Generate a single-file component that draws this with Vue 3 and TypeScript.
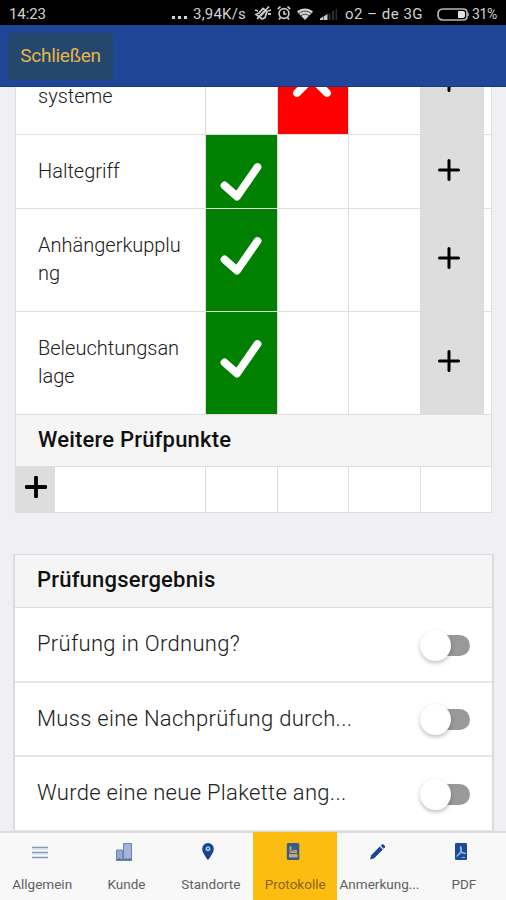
<script setup lang="ts">
type Mark = 'ok' | 'fail' | null

interface CheckRow {
  id: string
  lines: string[]
  size: 'single' | 'double'
  marks: Mark[]
}

interface Tab {
  icon: string
  label: string
  active?: boolean
}

const checks: CheckRow[] = [
  { id: 'systeme', lines: ['', 'systeme'], size: 'double', marks: [null, 'fail', null] },
  { id: 'haltegriff', lines: ['Haltegriff'], size: 'single', marks: ['ok', null, null] },
  { id: 'kupplung', lines: ['Anhängerkupplu', 'ng'], size: 'double', marks: ['ok', null, null] },
  { id: 'beleuchtung', lines: ['Beleuchtungsan', 'lage'], size: 'double', marks: ['ok', null, null] },
]

const questions: string[] = [
  'Prüfung in Ordnung?',
  'Muss eine Nachprüfung durch...',
  'Wurde eine neue Plakette ang...',
]

const tabs: Tab[] = [
  { icon: 'menu', label: 'Allgemein' },
  { icon: 'building', label: 'Kunde' },
  { icon: 'pin', label: 'Standorte' },
  { icon: 'form', label: 'Protokolle', active: true },
  { icon: 'pencil', label: 'Anmerkung...' },
  { icon: 'pdf', label: 'PDF' },
]
</script>

<template>
  <div class="screen">
    <div class="status">
      <span class="clock">14:23</span>
      <span class="dots"><i></i><i></i><i></i></span>
      <span class="speed">3,94K/s</span>
      <svg class="s-mute" viewBox="0 0 18 16" fill="none" stroke="#c8c8c8" stroke-width="1.800">
        <path d="M2 9.500 5 8l4-4.500 4 3-2 6-3 1.500zM3 14 15 1.500M14 6l3-1M14 9h3M1 5l3 1" />
        <path d="M6 11l6-6" stroke-width="2.400" />
      </svg>
      <svg class="s-alarm" viewBox="0 0 14 16" fill="none" stroke="#c8c8c8" stroke-width="1.700">
        <circle cx="7" cy="8.500" r="4.900" />
        <path d="M7 6v3h2.500M.8 4.200l2.700-2.700M13.200 4.200l-2.700-2.700M3.500 12.500 2 14.500M10.500 12.500l1.500 2" />
      </svg>
      <svg class="s-wifi" viewBox="0 0 16 12">
        <path d="M0 3.800C4.500-.6 11.500-.6 16 3.800L8 12z" fill="#d2d2d2" />
        <path d="M1.800 5.600c3.600-3.300 8.800-3.300 12.400 0M4 7.900c2.400-2.200 5.600-2.200 8 0" fill="none" stroke="#222" stroke-width=".8" />
      </svg>
      <svg class="s-signal" viewBox="0 0 18 11">
        <path d="M0 11V9.500L7.500 5v6z" fill="#c8c8c8" />
        <path d="M3.500 7v4" stroke="#333" stroke-width=".7" />
        <path d="M8.500 11V4.500H10.500V11zM12 11V2h2v9zM15.500 11V0h1.500v11z" fill="#303030" />
      </svg>
      <span class="carrier">o2 – de 3G</span>
      <svg class="s-battery" viewBox="0 0 32 13">
        <path d="M6 1h20q4 0 4 3.500v4q0 3.500-4 3.500H6Q1 12 1 6.500T6 1z" fill="none" stroke="#b8b8b8" stroke-width="1.700" />
        <path d="M21 3h5q2 0 2 2v3q0 2-2 2h-5z" fill="#e2e2e2" />
        <path d="M31 5v3" stroke="#b8b8b8" stroke-width="1.500" />
      </svg>
      <span class="percent">31%</span>
    </div>

    <header class="toolbar">
      <button class="close"><span>Schließen</span></button>
    </header>

    <main class="content">
      <section class="table">
        <div v-for="row in checks" :key="row.id" class="row" :class="row.size">
          <div class="label">
            <span v-for="(line, n) in row.lines" :key="n">{{ line }}</span>
          </div>
          <div v-for="(mark, n) in row.marks" :key="n" class="cell" :class="mark">
            <svg v-if="mark" viewBox="0 0 42 42" fill="none" stroke="#fff" stroke-linecap="round" stroke-linejoin="round">
              <path v-if="mark === 'ok'" d="M4.500 25.500 17 36.500 37.500 7" stroke-width="7.800" />
              <path v-else d="M6 6 36 36M36 6 6 36" stroke-width="7.800" />
            </svg>
          </div>
          <div class="add-cell">
            <button class="add">
              <svg viewBox="0 0 22 22"><path d="M11 1.500v19M1.500 11h19" /></svg>
            </button>
          </div>
        </div>
        <h2 class="heading more"><span>Weitere Prüfpunkte</span></h2>
        <div class="row blank">
          <div class="new-cell">
            <button class="add small">
              <svg viewBox="0 0 22 22"><path d="M11 1.500v19M1.500 11h19" /></svg>
            </button>
          </div>
          <div v-for="n in 4" :key="n" class="cell"></div>
        </div>
      </section>

      <section class="result">
        <h2 class="heading"><span>Prüfungsergebnis</span></h2>
        <div v-for="q in questions" :key="q" class="question">
          <span>{{ q }}</span>
          <span class="toggle"><i></i></span>
        </div>
      </section>
    </main>

    <nav class="tabs">
      <a v-for="tab in tabs" :key="tab.label" class="tab" :class="{ active: tab.active }">
        <svg viewBox="0 0 18 20">
          <g v-if="tab.icon === 'menu'">
            <path d="M1 5.500h16M1 10.500h16M1 15.500h16" stroke="#8395bf" stroke-width="1.600" />
            <path d="M1 7h16M1 12h16" stroke="#cbd4e6" stroke-width="1" />
          </g>
          <g v-else-if="tab.icon === 'building'">
            <path d="M1.500 8h6v10h-6z" fill="#96a9cc" stroke="#7188b7" />
            <path d="M8.500 1.500h8v16.500h-8z" fill="#a2b5d8" stroke="#6984b7" />
            <path d="M1 18h16M4 16v2M11 16v2M14.500 16v2" stroke="#536c9c" stroke-width="1.300" />
          </g>
          <g v-else-if="tab.icon === 'pin'">
            <path d="M9 1a5.800 5.800 0 0 0-5.800 5.900C3.200 11 9 18 9 18s5.800-7 5.800-11.100A5.800 5.800 0 0 0 9 1z" fill="#164494" />
            <circle cx="9" cy="6.700" r="2.500" fill="#a9c0e6" />
            <circle cx="9" cy="6.700" r="1" fill="#315da8" />
          </g>
          <g v-else-if="tab.icon === 'form'">
            <rect x="2.800" y="1" width="12.500" height="17" rx="1.500" fill="#315f86" />
            <path d="M5.500 4.500h2v4h-2zM5.500 9.300h7.500v1.800H5.500zM5 12h8.500v3.500H5z" fill="#c5a77a" />
            <path d="M8.500 7.800H13v1.500H8.500z" fill="#b49b70" />
          </g>
          <g v-else-if="tab.icon === 'pencil'">
            <path d="M2 17.500l1.200-4.300L11.800 4.600l3 3-8.600 8.700zM12.700 3.700l1.200-1.200q.8-.7 1.600 0l1.400 1.400q.7.800 0 1.600l-1.200 1.200z" fill="#1b4591" />
          </g>
          <g v-else>
            <rect x="3" y="1" width="12" height="17" rx="1.200" fill="#194b98" />
            <path d="M8.200 4.500q2 0 .8 4.200Q7.500 12.500 5 14.500q-.7-1.600 3-3.300 3.500-1.300 5.500.2-1.500 1.200-4.500-2.500-1-2.500-.8-4.400" fill="none" stroke="#b2c9e9" stroke-width="1" />
            <path d="M9.500 15.500H13" stroke="#8ba9d5" />
          </g>
        </svg>
        <span>{{ tab.label }}</span>
      </a>
    </nav>
  </div>
</template>

<style>
body {
  margin: 0;
  background: #efeff4;
}
</style>

<style scoped>
.screen {
  width: 506px;
  height: 900px;
  display: flex;
  flex-direction: column;
  overflow: hidden;
  background: #efeff4;
  font-family: Roboto, "Liberation Sans", sans-serif;
  color: #202020;
}
.screen * {
  box-sizing: border-box;
}
svg {
  display: block;
  flex: none;
}
button {
  border: 0;
  padding: 0;
  font: inherit;
}
.status {
  flex: none;
  height: 25px;
  background: #000;
  color: #d2d2d2;
  display: flex;
  align-items: center;
  padding: 3px 8px 0 9px;
  font-size: 15px;
  line-height: 22px;
  white-space: nowrap;
}
.clock {
  width: 163px;
  letter-spacing: -0.1px;
}
.dots {
  display: flex;
  gap: 3px;
  width: 21px;
  padding-top: 7px;
}
.dots i {
  width: 3px;
  height: 3px;
  background: #d4d4d4;
}
.speed {
  width: 61px;
  letter-spacing: 0.2px;
}
.s-mute { width: 18px; height: 16px; margin-right: 5px; margin-top: -3px; }
.s-alarm { width: 14px; height: 16px; margin-right: 6px; margin-top: -3px; }
.s-wifi { width: 16px; height: 12px; margin-right: 7px; margin-top: -1px; }
.s-signal { width: 18px; height: 11px; margin-right: 7px; margin-top: 1px; }
.carrier {
  width: 92px;
  letter-spacing: 0.5px;
}
.s-battery { width: 32px; height: 13px; margin-right: 3px; }
.percent {
  font-size: 14px;
  letter-spacing: -0.4px;
}
.toolbar {
  flex: none;
  height: 62px;
  background: #204797;
  border-bottom: 1px solid #17387d;
  padding: 8px;
}
.close {
  display: flex;
  justify-content: center;
  width: 105px;
  height: 47px;
  background: #24476e;
  color: #e8b54a;
  font-size: 19px;
  letter-spacing: -0.25px;
  line-height: 45px;
}
.content {
  flex: 1;
  min-height: 0;
  overflow: hidden;
}
.table {
  width: 477px;
  margin: -56px 0 0 15px;
  border: 1px solid #dedede;
  background: #fff;
}
.row {
  display: grid;
  grid-template-columns: 189px 72px 71px 72px 71px;
  border-bottom: 1px solid #dedede;
}
.row.double { height: 103px; }
.row.single { height: 74px; }
.row.blank {
  height: 45px;
  border-bottom: 0;
}
.label {
  padding: 22px 0 0 22px;
  display: flex;
  flex-direction: column;
  font-size: 20px;
  font-weight: 300;
  line-height: 28px;
  white-space: nowrap;
}
.label span {
  height: 28px;
}
.cell {
  border-left: 1px solid #dedede;
  display: flex;
  justify-content: center;
  padding: 25px 2px 0 0;
}
.cell svg {
  width: 42px;
  height: 42px;
}
.cell.ok { background: #008000; }
.cell.fail { background: #f00; }
.add-cell {
  display: flex;
  border-left: 1px solid #dedede;
}
.add {
  display: flex;
  align-items: center;
  justify-content: center;
  width: 64px;
  height: calc(100% + 1px);
  margin-left: -1px;
  padding: 0 6px 5px 0;
  background: #ddd;
}
.add svg {
  width: 22px;
  height: 22px;
  fill: none;
  stroke: #000;
  stroke-width: 3;
  stroke-linecap: round;
}
.add.small {
  width: 39px;
  height: 100%;
  margin-left: 0;
  padding: 0 0 5px;
}
.add.small svg {
  stroke-width: 3.800;
}
.heading {
  margin: 0;
  height: 52px;
  padding-left: 22px;
  background: #f5f5f5;
  border-bottom: 1px solid #dedede;
  color: #111;
  font-size: 22px;
  font-weight: 500;
  line-height: 50px;
  letter-spacing: 0.2px;
}
.result {
  width: 481px;
  margin: 41px 0 0 13px;
  border: 1px solid #dcdcdf;
  border-width: 1px 2px 1px 2px;
  background: #fff;
}
.result .heading {
  height: 53px;
}
.question {
  height: 74.500px;
  padding: 0 22px 1px 22px;
  border-bottom: 2px solid #e6e6e6;
  display: flex;
  align-items: center;
  justify-content: space-between;
  font-size: 22px;
  font-weight: 300;
  letter-spacing: 0.3px;
}
.toggle {
  display: flex;
  align-items: center;
  width: 47px;
  height: 21px;
  margin-top: 3px;
  border-radius: 11px;
  background: #999;
}
.toggle i {
  width: 31px;
  height: 31px;
  margin-left: -3px;
  border-radius: 50%;
  background: #fff;
  box-shadow: 0 2px 4px rgba(0, 0, 0, 0.26);
}
.tabs {
  flex: none;
  height: 69px;
  display: grid;
  grid-template-columns: repeat(6, 1fr);
  background: #f8f8f8;
  border-top: 2px solid #dcdcde;
}
.tab {
  min-width: 0;
  display: flex;
  flex-direction: column;
  align-items: center;
  padding-top: 10px;
  margin-top: -1px;
  color: #606060;
  font-size: 13.500px;
  line-height: 18px;
  white-space: nowrap;
}
.tab svg {
  width: 18px;
  height: 20px;
  margin: 0 0 13px -5px;
}
.tab.active {
  background: #fdbd10;
  color: #84651c;
}
</style>
